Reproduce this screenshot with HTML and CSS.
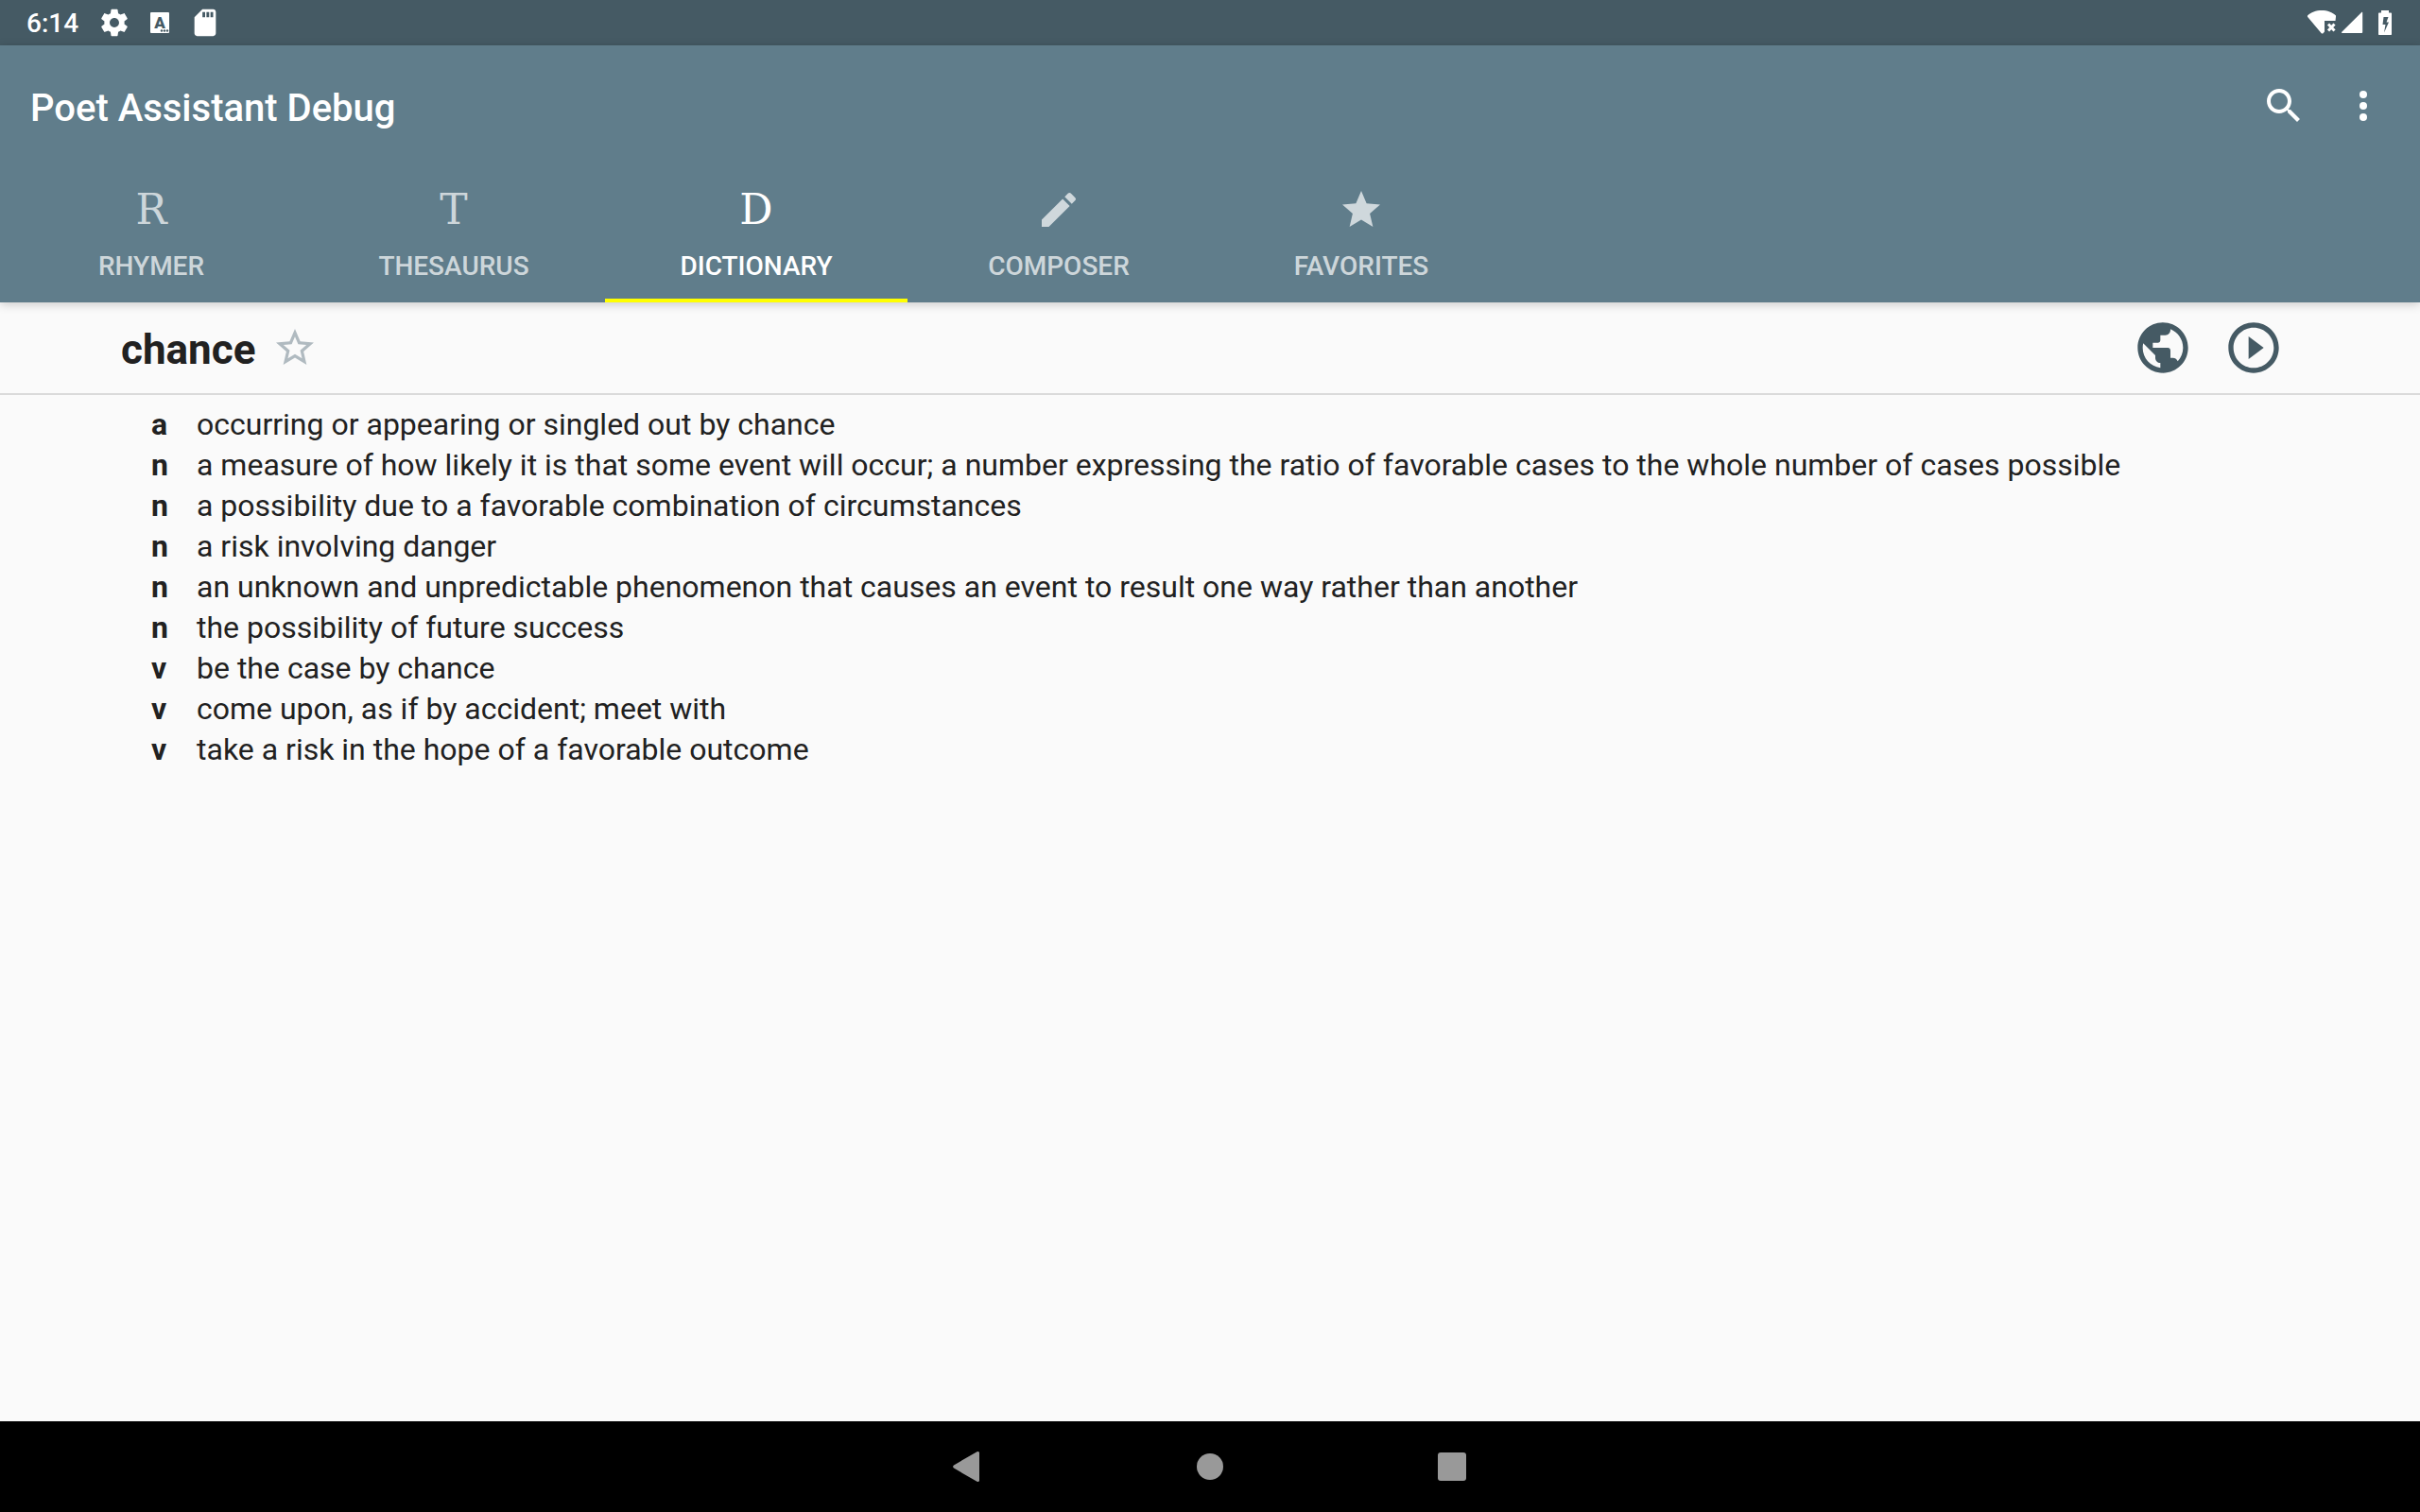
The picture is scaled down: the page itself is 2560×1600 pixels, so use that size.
FILE: index.html
```html
<!DOCTYPE html>
<html lang="en">
<head>
<meta charset="utf-8">
<meta name="viewport" content="width=device-width, initial-scale=1">
<title>Poet Assistant Debug</title>
<link rel="stylesheet" href="styles.css">
</head>
<body>
<div class="status-bar">
  <div class="status-group">
    <span class="clock">6:14</span>
    <svg class="status-icon" viewBox="0 0 24 24" aria-hidden="true"><path d="M19.43 12.98c.04-.32.07-.64.07-.98s-.03-.66-.07-.98l2.11-1.65c.19-.15.24-.42.12-.64l-2-3.46c-.12-.22-.39-.3-.61-.22l-2.49 1c-.52-.4-1.08-.73-1.69-.98l-.38-2.65C14.46 2.18 14.25 2 14 2h-4c-.25 0-.46.18-.49.42l-.38 2.65c-.61.25-1.17.59-1.69.98l-2.49-1c-.23-.09-.49 0-.61.22l-2 3.46c-.13.22-.07.49.12.64l2.11 1.65c-.04.32-.07.65-.07.98s.03.66.07.98l-2.11 1.65c-.19.15-.24.42-.12.64l2 3.46c.12.22.39.3.61.22l2.49-1c.52.4 1.08.73 1.69.98l.38 2.65c.03.24.24.42.49.42h4c.25 0 .46-.18.49-.42l.38-2.65c.61-.25 1.17-.59 1.69-.98l2.49 1c.23.09.49 0 .61-.22l2-3.46c.12-.22.07-.49-.12-.64l-2.11-1.65zM12 15.5c-1.93 0-3.5-1.57-3.5-3.5s1.57-3.5 3.5-3.5 3.5 1.57 3.5 3.5-1.57 3.5-3.5 3.5z"/></svg>
    <svg class="status-icon" viewBox="0 0 34 34" aria-hidden="true"><rect x="7" y="6" width="20" height="22" rx="1"/><text class="glyph-a" x="17" y="23" text-anchor="middle">A</text><g class="glyph-dots"><circle cx="19" cy="25.500" r="1.200"/><circle cx="22" cy="25.500" r="1.200"/><circle cx="25" cy="25.500" r="1.200"/></g></svg>
    <svg class="status-icon" viewBox="0 0 24 24" aria-hidden="true"><path d="M18 2h-8L4.020 8 4 20c0 1.100.9 2 2 2h12c1.100 0 2-.9 2-2V4c0-1.100-.9-2-2-2zm-6 6h-2V4h2v4zm3 0h-2V4h2v4zm3 0h-2V4h2v4z"/></svg>
  </div>
  <div class="status-group status-right">
    <svg class="wifi" viewBox="0 0 32 26" aria-hidden="true"><path d="M16 0C10 0 4.500 2 1 5.500v1.300L15.500 24c.6.700 1.600.7 2.200 0L19 22.500V11h11.500l.5-4.200V5.500C27.500 2 22 0 16 0z"/><path class="cross" d="M23 14.500l6.500 7M29.500 14.500l-6.500 7"/></svg>
    <svg class="signal" viewBox="0 0 24 24" aria-hidden="true"><path d="M22 1.200c.7-.7 1.200-.5 1.200.4V22c0 .6-.3.900-.9.9H1.800c-.9 0-1.100-.5-.5-1.100z"/></svg>
    <svg class="battery" viewBox="0 0 14 26" aria-hidden="true"><path fill-rule="evenodd" d="M3 2.500V0h8v2.500h2.300c.4 0 .7.300.7.700v22.100c0 .4-.3.700-.7.700H.7c-.4 0-.7-.3-.7-.7V3.200c0-.4.300-.7.700-.7zM5.500 7L4.500 15h3L6 23.500 11 12.500H8.500L10.500 7z"/></svg>
  </div>
</div>

<header class="app-bar">
  <div class="toolbar">
    <h1 class="app-title">Poet Assistant Debug</h1>
    <div class="toolbar-actions">
      <button class="icon-button" type="button" aria-label="Search"><svg class="icon" viewBox="0 0 24 24"><path d="M15.500 14h-.79l-.28-.27C15.410 12.590 16 11.110 16 9.500 16 5.910 13.090 3 9.500 3S3 5.910 3 9.500 5.910 16 9.500 16c1.610 0 3.090-.59 4.230-1.570l.27.28v.79l5 4.990L20.490 19l-4.990-5zm-6 0C7.010 14 5 11.990 5 9.500S7.010 5 9.500 5 14 7.010 14 9.500 11.990 14 9.500 14z"/></svg></button>
      <button class="icon-button menu-button" type="button" aria-label="More options"><svg class="icon" viewBox="0 0 24 24"><circle cx="12" cy="6" r="2"/><circle cx="12" cy="12" r="2"/><circle cx="12" cy="18" r="2"/></svg></button>
    </div>
  </div>
  <div class="tabs" role="tablist">
    <button class="tab" type="button" role="tab" aria-selected="false"><span class="tab-letter">R</span><span class="tab-label">RHYMER</span></button>
    <button class="tab" type="button" role="tab" aria-selected="false"><span class="tab-letter">T</span><span class="tab-label">THESAURUS</span></button>
    <button class="tab tab-active" type="button" role="tab" aria-selected="true"><span class="tab-letter">D</span><span class="tab-label">DICTIONARY</span></button>
    <button class="tab" type="button" role="tab" aria-selected="false"><svg class="icon" viewBox="0 0 24 24"><path d="M3 17.250V21h3.750L17.810 9.940l-3.750-3.750L3 17.250zM20.710 7.040c.39-.39.39-1.020 0-1.410l-2.340-2.340c-.39-.39-1.020-.39-1.410 0l-1.830 1.830 3.750 3.750 1.830-1.830z"/></svg><span class="tab-label">COMPOSER</span></button>
    <button class="tab" type="button" role="tab" aria-selected="false"><svg class="icon" viewBox="0 0 24 24"><path d="M12 17.270L18.180 21l-1.640-7.030L22 9.240l-7.190-.61L12 2 9.190 8.630 2 9.240l5.460 4.730L5.820 21z"/></svg><span class="tab-label">FAVORITES</span></button>
  </div>
</header>

<main class="content">
  <div class="word-bar">
    <h2 class="word">chance</h2>
    <button class="icon-button favorite" type="button" aria-label="Add to favorites"><svg class="icon" viewBox="0 0 24 24"><path d="M22 9.240l-7.190-.62L12 2 9.190 8.630 2 9.240l5.460 4.730L5.820 21 12 17.270 18.180 21l-1.630-7.030L22 9.240zM12 15.400l-3.760 2.270 1-4.280-3.320-2.880 4.380-.38L12 6.100l1.710 4.040 4.380.38-3.320 2.880 1 4.280L12 15.400z"/></svg></button>
    <div class="word-actions">
      <button class="icon-button word-action" type="button" aria-label="Look up on the web"><svg class="icon-large" viewBox="0 0 24 24"><path d="M12 2C6.480 2 2 6.480 2 12s4.480 10 10 10 10-4.480 10-10S17.520 2 12 2zm-1 17.930c-3.950-.49-7-3.850-7-7.930 0-.62.080-1.210.21-1.790L9 15v1c0 1.100.9 2 2 2v1.930zm6.900-2.540c-.26-.81-1-1.390-1.900-1.390h-1v-3c0-.55-.45-1-1-1H8v-2h2c.55 0 1-.45 1-1V7h2c1.100 0 2-.9 2-2v-.41c2.930 1.190 5 4.060 5 7.410 0 2.080-.8 3.970-2.100 5.390z"/></svg></button>
      <button class="icon-button word-action" type="button" aria-label="Play pronunciation"><svg class="icon-large" viewBox="0 0 24 24"><path d="M10 16.500l6-4.500-6-4.500v9zM12 2C6.480 2 2 6.480 2 12s4.480 10 10 10 10-4.480 10-10S17.520 2 12 2zm0 18c-4.410 0-8-3.590-8-8s3.590-8 8-8 8 3.590 8 8-3.590 8-8 8z"/></svg></button>
    </div>
  </div>
  <dl class="definitions">
    <dt>a</dt><dd>occurring or appearing or singled out by chance</dd>
    <dt>n</dt><dd>a measure of how likely it is that some event will occur; a number expressing the ratio of favorable cases to the whole number of cases possible</dd>
    <dt>n</dt><dd>a possibility due to a favorable combination of circumstances</dd>
    <dt>n</dt><dd>a risk involving danger</dd>
    <dt>n</dt><dd>an unknown and unpredictable phenomenon that causes an event to result one way rather than another</dd>
    <dt>n</dt><dd>the possibility of future success</dd>
    <dt>v</dt><dd>be the case by chance</dd>
    <dt>v</dt><dd>come upon, as if by accident; meet with</dd>
    <dt>v</dt><dd>take a risk in the hope of a favorable outcome</dd>
  </dl>
</main>

<nav class="nav-bar" aria-label="System navigation">
  <button class="nav-button" type="button" aria-label="Back"><svg class="nav-icon" viewBox="0 0 40 40"><path d="M29.500 4.300c1-.7 2.500-.2 2.500 1.200v29c0 1.400-1.500 1.900-2.500 1.200L5 21.600c-1.200-.9-1.200-2.300 0-3.200z"/></svg></button>
  <button class="nav-button" type="button" aria-label="Home"><svg class="nav-icon" viewBox="0 0 40 40"><circle cx="20" cy="20" r="14"/></svg></button>
  <button class="nav-button" type="button" aria-label="Recent apps"><svg class="nav-icon" viewBox="0 0 40 40"><rect x="5" y="5" width="30" height="30" rx="3"/></svg></button>
</nav>
</body>
</html>
```

FILE: styles.css
```css
* {
  box-sizing: border-box;
}

body {
  margin: 0;
  min-height: 100vh;
  display: flex;
  flex-direction: column;
  background: #fafafa;
  color: #212121;
  font-family: Roboto, "Liberation Sans", sans-serif;
}

button {
  border: 0;
  padding: 0;
  background: none;
  color: inherit;
  font: inherit;
  cursor: pointer;
}

svg {
  display: block;
  flex: none;
  fill: currentColor;
}

/* Status bar */
.status-bar {
  display: flex;
  justify-content: space-between;
  height: 48px;
  padding: 0 30px 0 28px;
  background: #455a64;
  color: #fff;
}

.status-group {
  display: flex;
  align-items: center;
  gap: 14px;
}

.clock {
  width: 62px;
  padding-top: 2px;
  font-size: 28px;
  font-weight: 500;
  line-height: 32px;
}

.status-icon {
  width: 34px;
  height: 34px;
}

.glyph-a {
  fill: #455a64;
  font-size: 17px;
  font-weight: 900;
}

.glyph-dots {
  fill: #455a64;
}

.status-right {
  gap: 4px;
}

.wifi {
  width: 32px;
  height: 26px;
}

.cross {
  stroke: currentColor;
  stroke-width: 3;
}

.signal {
  width: 24px;
  height: 24px;
}

.battery {
  width: 14px;
  height: 26px;
  margin-left: 12px;
}

/* App bar */
.app-bar {
  position: relative;
  background: #607d8b;
  color: #fff;
  box-shadow: 0 2px 10px rgba(0, 0, 0, 0.2);
}

.toolbar {
  display: flex;
  align-items: center;
  justify-content: space-between;
  height: 128px;
  padding: 0 20px 0 32px;
}

.app-title {
  margin: 0;
  padding-top: 6px;
  font-size: 40px;
  font-weight: 500;
  line-height: 48px;
}

.toolbar-actions {
  display: flex;
}

.icon-button {
  display: flex;
  align-items: center;
  justify-content: center;
  width: 88px;
  height: 96px;
}

.menu-button {
  width: 80px;
}

.icon {
  width: 48px;
  height: 48px;
}

.tabs {
  display: flex;
}

.tab {
  display: flex;
  flex-direction: column;
  align-items: center;
  justify-content: center;
  gap: 20px;
  width: 320px;
  height: 144px;
  border: solid transparent;
  border-width: 4px 0;
  color: rgba(255, 255, 255, 0.7);
}

.tab-active {
  border-bottom-color: #ff0;
  color: #fff;
}

.tab-letter {
  height: 48px;
  font-family: "DejaVu Serif", serif;
  font-size: 44px;
  line-height: 48px;
}

.tab-label {
  font-size: 28px;
  font-weight: 500;
  line-height: 32px;
}

/* Dictionary entry */
.content {
  flex: 1;
}

.word-bar {
  display: flex;
  align-items: center;
  height: 98px;
  padding: 0 128px;
  border-bottom: 2px solid #dadada;
}

.word {
  margin: 0;
  padding-top: 4px;
  font-size: 44px;
  font-weight: 700;
  line-height: 52px;
}

.favorite {
  width: 84px;
  color: #b0bac0;
}

.word-actions {
  display: flex;
  margin-left: auto;
  color: #455a64;
}

.word-action {
  width: 96px;
}

.icon-large {
  width: 64px;
  height: 64px;
}

.definitions {
  display: grid;
  grid-template-columns: 48px 1fr;
  margin: 0;
  padding: 10px 128px 0 160px;
  font-size: 32px;
  line-height: 43px;
}

.definitions dt {
  font-weight: 700;
}

.definitions dd {
  margin: 0;
}

/* System navigation */
.nav-bar {
  display: flex;
  justify-content: center;
  height: 96px;
  background: #000;
  color: #999;
}

.nav-button {
  display: flex;
  align-items: center;
  justify-content: center;
  width: 256px;
}

.nav-icon {
  width: 40px;
  height: 40px;
}
```
